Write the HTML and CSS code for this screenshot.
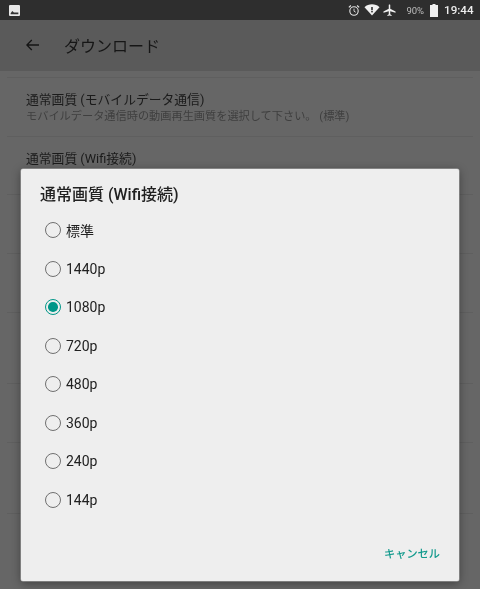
FILE: index.html
```html
<!DOCTYPE html>
<html lang="ja">
<head>
<meta charset="utf-8">
<title>ダウンロード</title>
<link rel="stylesheet" href="styles.css">
</head>
<body>
<div class="screen">
  <header class="status">
    <svg class="thumb" viewBox="0 0 10 10"><rect width="10" height="10" rx="1" fill="#e8e8e8"/><path d="M1.5 7.5 L3 5.5 L4.5 6.8 L8.5 6.8 V8.5 H1.5Z" fill="#333"/></svg>
    <div class="status-right">
      <svg class="ico alarm" viewBox="0 0 14 14"><circle cx="7" cy="7.6" r="4.9" fill="none" stroke="#e6e6e6" stroke-width="1.3"/><path d="M7 4.8V7.8L9 9" fill="none" stroke="#e6e6e6" stroke-width="1"/><path d="M1 3.4 3.4 1.2M13 3.4 10.6 1.2" stroke="#e6e6e6" stroke-width="1.4"/></svg>
      <svg class="ico wifi" viewBox="0 0 16 12"><path d="M0.5 3.2C4.5-.6 11.500-.6 15.500 3.2L8 11.500Z" fill="#f0f0f0"/><path d="M7.200 3H8.800V6.300H7.200Z" fill="#2e2e2e"/><rect x="7.200" y="7" width="1.600" height="1.400" fill="#2e2e2e"/></svg>
      <svg class="ico plane" viewBox="0 0 14 14"><path d="M6.200 1C6.200.3 7.800.3 7.800 1V5L13.500 8.200V9.500L7.800 7.800V11L9.300 12.100V13L7 12.400 4.700 13V12.100L6.200 11V7.800L.5 9.500V8.200L6.200 5Z" fill="#f0f0f0"/></svg>
      <span class="pct">90%</span>
      <svg class="ico batt" viewBox="0 0 8 13"><path d="M2.500 0H5.500V1H8V13H0V1H2.500Z" fill="#f0f0f0"/></svg>
      <span class="time">19:44</span>
    </div>
  </header>
  <div class="appbar">
    <svg class="back" viewBox="0 0 13 12"><path d="M13 6H1M5.800 1 .8 6 5.800 11" fill="none" stroke="#141414" stroke-width="1.300"/></svg>
    <span class="apptitle">ダウンロード</span>
  </div>
  <main class="list">
    <div class="row">
      <div class="row-title">通常画質 (モバイルデータ通信)</div>
      <div class="row-sub">モバイルデータ通信時の動画再生画質を選択して下さい。 (標準)</div>
    </div>
    <div class="row"><div class="row-title">通常画質 (Wifi接続)</div></div>
    <div class="row"></div>
    <div class="row"></div>
    <div class="row tall"></div>
    <div class="row"></div>
    <div class="row tall"></div>
    <div class="row"></div>
  </main>
  <section class="dialog">
    <h2 class="dlg-title">通常画質 (Wifi接続)</h2>
    <div class="options">
      <div class="opt"><span class="radio"></span><span>標準</span></div>
      <div class="opt"><span class="radio"></span><span>1440p</span></div>
      <div class="opt"><span class="radio on"></span><span>1080p</span></div>
      <div class="opt"><span class="radio"></span><span>720p</span></div>
      <div class="opt"><span class="radio"></span><span>480p</span></div>
      <div class="opt"><span class="radio"></span><span>360p</span></div>
      <div class="opt"><span class="radio"></span><span>240p</span></div>
      <div class="opt"><span class="radio"></span><span>144p</span></div>
    </div>
    <div class="actions"><span class="cancel">キャンセル</span></div>
  </section>
</div>
</body>
</html>
```
FILE: styles.css
```css
* { box-sizing: border-box; }
html, body { margin: 0; padding: 0; }
body { width: 480px; height: 589px; overflow: hidden; font-family: Roboto, "Noto Sans CJK JP", sans-serif; }
.screen { position: relative; width: 480px; height: 589px; background: #666; overflow: hidden; display: flex; flex-direction: column; filter: blur(.3px); }
.status { height: 20px; flex: none; background: #2e2e2e; display: flex; align-items: center; justify-content: space-between; padding: 0 6.500px 0 9px; }
.thumb { width: 11px; height: 11px; display: block; }
.status-right { display: flex; align-items: center; }
.ico { display: block; }
.alarm { width: 12px; height: 13px; margin-right: 4px; }
.wifi { width: 16px; height: 12px; margin-right: 3px; }
.plane { width: 13px; height: 13px; margin-right: 10px; }
.pct { font-size: 9.500px; color: #bdbdbd; margin-right: 6px; }
.batt { width: 8px; height: 13px; margin-right: 6px; }
.time { font-size: 11.600px; font-weight: 500; color: #ededed; }
.appbar { height: 51px; flex: none; background: #5a5a5a; display: flex; align-items: center; padding: 0 0 2px 26px; }
.back { width: 13px; height: 12px; margin-right: 25px; display: block; }
.apptitle { font-size: 16px; color: #161616; }
.list { padding: 6px 7px 0; }
.row { height: 58.700px; border-top: 1px solid #5f5f5f; padding: 13px 19px 0; }
.row.tall { height: 71.300px; }
.row-title { font-size: 12.800px; line-height: 18px; color: #1b1b1b; }
.row-sub { font-size: 11.200px; line-height: 15px; color: #3f3f3f; }
.dialog { position: absolute; left: 21px; top: 169px; width: 438px; height: 412px; background: #eee; border-radius: 2px; box-shadow: 0 0 0 .5px #adadad, 0 2px 10px rgba(0,0,0,.4); display: flex; flex-direction: column; }
.dlg-title { margin: 0; padding: 15px 0 0 19px; height: 42px; font-size: 16px; line-height: 22px; font-weight: 500; color: #212121; }
.options { display: flex; flex-direction: column; padding-left: 24px; }
.opt { height: 38.500px; display: flex; align-items: center; gap: 5px; font-size: 14px; color: #212121; }
.radio { width: 16px; height: 16px; border: 1.800px solid #707070; border-radius: 50%; display: block; flex: none; position: relative; }
.radio.on { border-color: #009688; }
.radio.on::after { content: ""; position: absolute; inset: 2.200px; border-radius: 50%; background: #009688; }
.actions { margin-top: auto; padding: 0 19px 18px 0; display: flex; justify-content: flex-end; }
.cancel { font-size: 11.200px; line-height: 16px; font-weight: 500; color: #129a8d; }
```
